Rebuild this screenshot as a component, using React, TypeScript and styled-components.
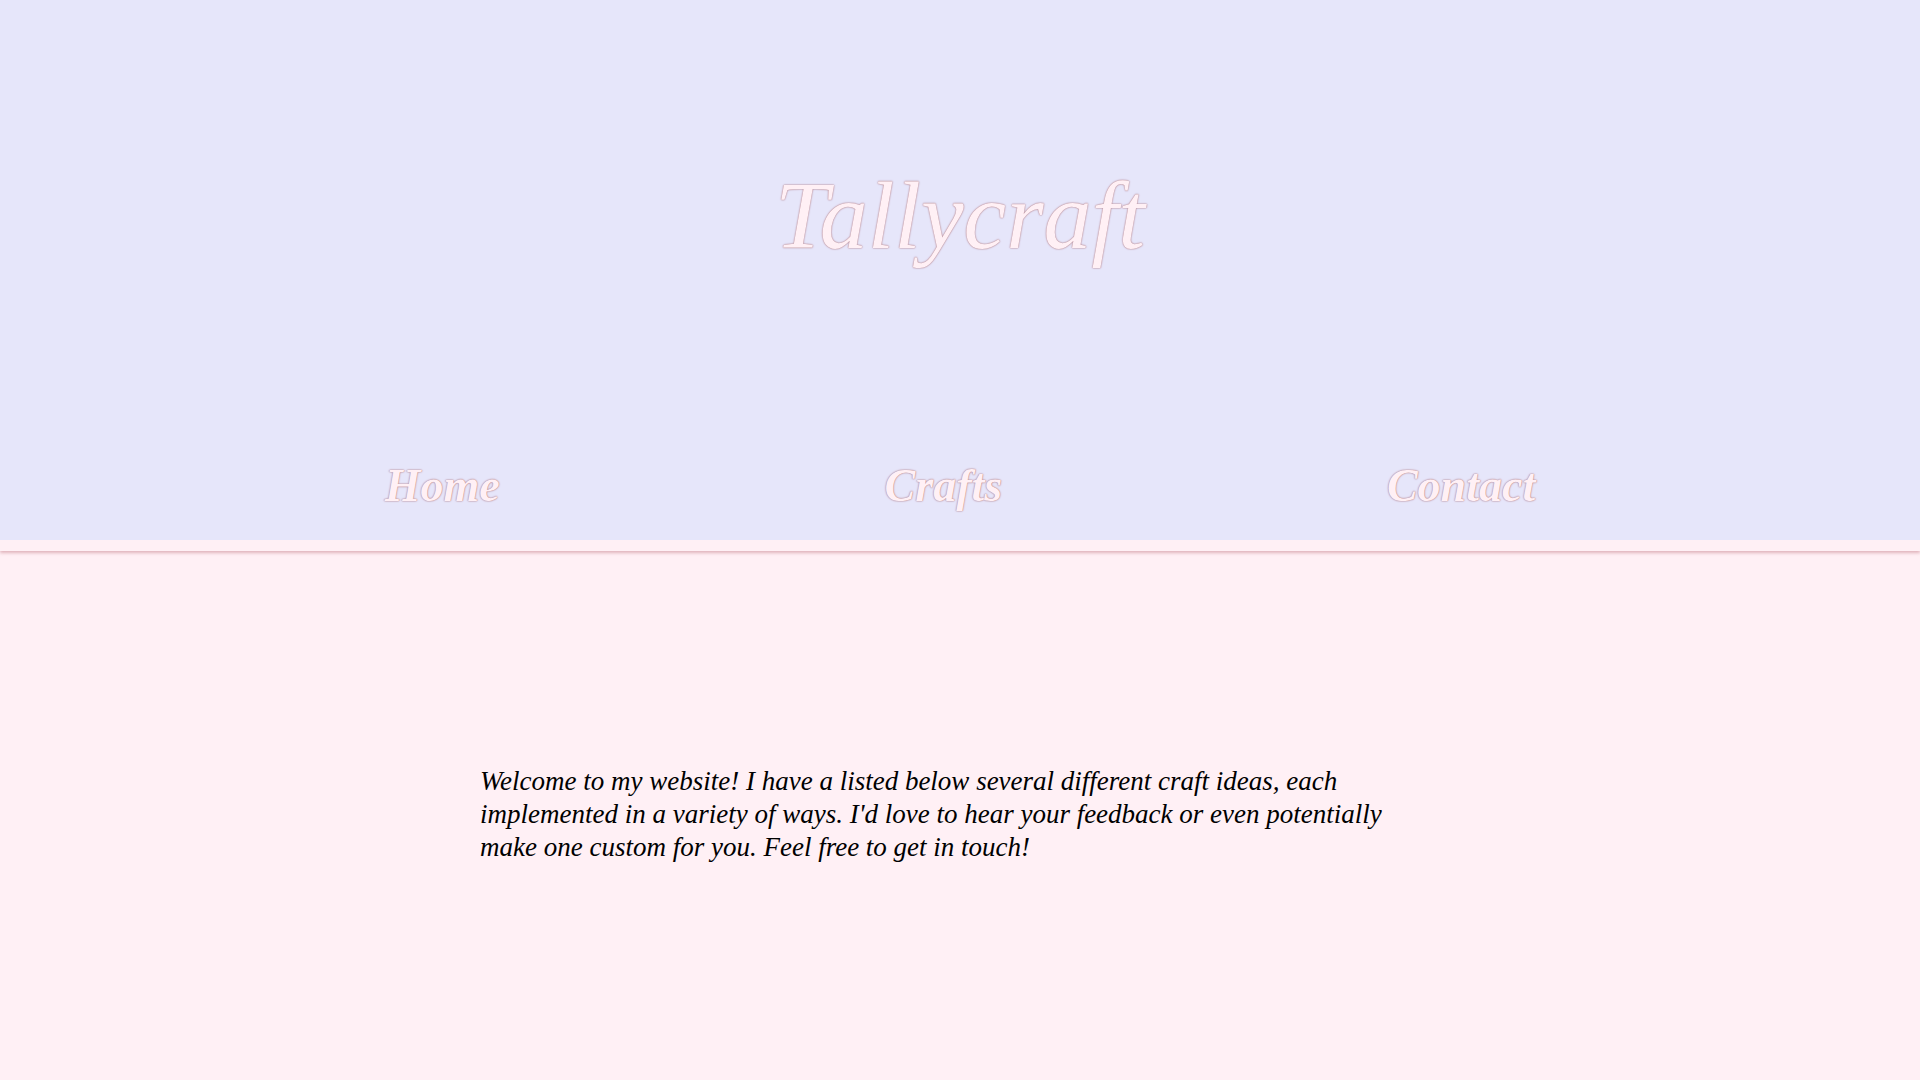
import React from "react";
import styled, { createGlobalStyle } from "styled-components";

const GlobalStyle = createGlobalStyle`
  html, body {
    margin: 0;
    padding: 0;
    background-color: #fff0f5;
  }
  html {
    overflow-y: scroll;
  }
  ::-webkit-scrollbar {
    width: 15px;
    background-color: #f1f1f1;
  }
  ::-webkit-scrollbar-thumb {
    background-color: #c1c1c1;
    border: 2px solid #f1f1f1;
    border-top-width: 0;
    border-bottom-width: 0;
  }
  body {
    font-family: "Liberation Serif", "DejaVu Serif", serif;
    font-style: italic;
  }
`;

const Header = styled.header`
  background-color: #e6e6fa;
  border-bottom: 11px solid #fff0f5;
  box-shadow: 0 2px 3px rgba(200, 130, 140, 0.55);
  padding-top: 168px;
`;

const Title = styled.h1`
  margin: 0;
  text-align: center;
  font-size: 96px;
  font-weight: 400;
  line-height: 1;
  color: #fff0f5;
  text-shadow: 0 0 2px #b07e88, 0 0 1px #b07e88;
`;

const Nav = styled.nav`
  display: flex;
  justify-content: space-evenly;
  margin-top: 194px;
  padding-bottom: 27px;
`;

const NavLink = styled.a`
  font-size: 46px;
  font-weight: 700;
  line-height: 1.2;
  color: #fff0f5;
  text-decoration: none;
  text-shadow: 0 0 2px #b07e88, 0 0 1px #b07e88;
  cursor: pointer;
`;

const Main = styled.main`
  padding-top: 214px;
  min-height: 4400px;
`;

const Intro = styled.p`
  width: 50%;
  margin: 0 auto;
  font-size: 27px;
  line-height: 33px;
  color: #000;
`;

const App: React.FC = () => {
  return (
    <>
      <GlobalStyle />
      <Header>
        <Title>Tallycraft</Title>
        <Nav>
          <NavLink>Home</NavLink>
          <NavLink>Crafts</NavLink>
          <NavLink>Contact</NavLink>
        </Nav>
      </Header>
      <Main>
        <Intro>
          Welcome to my website! I have a listed below several different craft
          ideas, each implemented in a variety of ways. I'd love to hear your
          feedback or even potentially make one custom for you. Feel free to get
          in touch!
        </Intro>
      </Main>
    </>
  );
};

export default App;
